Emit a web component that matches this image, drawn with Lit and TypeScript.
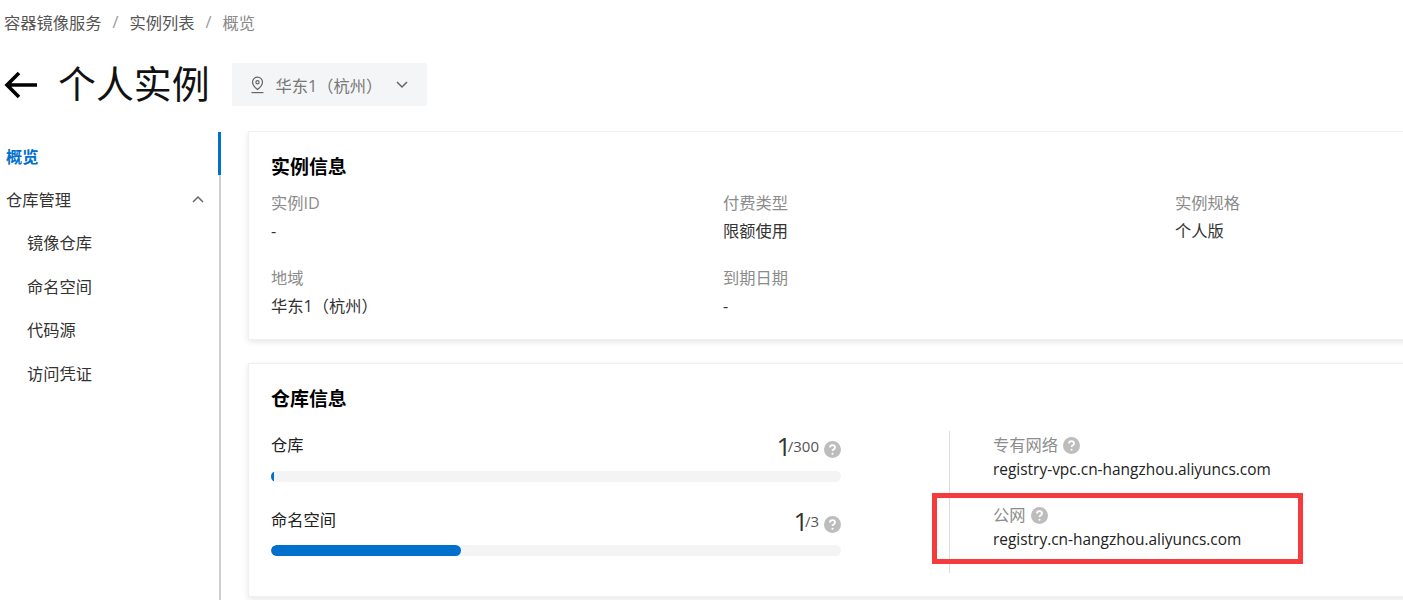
import { LitElement, html, css, svg } from 'lit';
import { customElement } from 'lit/decorators.js';

const help = html`<svg class="help" viewBox="0 0 16 16" aria-hidden="true">
  <circle cx="8" cy="8" r="8" fill="#bdbdbd"></circle>
  <path d="M5.6 6.2a2.4 2.4 0 0 1 4.8 0c0 1.5-2.4 1.7-2.4 3.3" fill="none" stroke="#fff" stroke-width="1.7"></path>
  <circle cx="8" cy="12" r="1.05" fill="#fff"></circle>
</svg>`;

const chevron = (d: string) => svg`<path d=${d} fill="none" stroke="currentColor" stroke-width="1.5"></path>`;

@customElement('app-root')
export class AppRoot extends LitElement {
  static styles = css`
    :host {
      display: block;
      width: 1403px;
      height: 600px;
      overflow: hidden;
      background: #fff;
      color: #333;
      font-family: 'Open Sans', 'Noto Sans CJK SC', sans-serif;
      font-size: 16.25px;
    }
    .crumbs {
      display: flex;
      align-items: center;
      height: 43px;
      padding-left: 4px;
      color: #555;
    }
    .crumbs .sep {
      margin: 0 11px;
      color: #999;
    }
    .crumbs .current {
      color: #888;
    }
    .head {
      display: flex;
      align-items: center;
      height: 43px;
      margin-top: 20px;
      padding-left: 4px;
    }
    .back {
      width: 34px;
      height: 30px;
      color: #000;
    }
    h1 {
      margin: -6px 22px 0 20px;
      font-size: 37.9px;
      font-weight: 400;
      color: #111;
    }
    .region {
      display: flex;
      align-items: center;
      width: 195px;
      height: 43px;
      box-sizing: border-box;
      padding-left: 18px;
      border-radius: 2px;
      background: #f4f5f6;
      color: #777;
    }
    .region .pin {
      width: 15px;
      height: 18px;
      margin-right: 11px;
    }
    .region .down {
      width: 14px;
      height: 10px;
      margin-left: 13px;
      color: #666;
    }
    .body {
      display: flex;
      margin-top: 26px;
    }
    nav {
      flex: none;
      width: 221px;
      height: 468px;
      box-sizing: border-box;
      border-right: 2px solid #d0d0d0;
      position: relative;
    }
    .item {
      display: flex;
      align-items: center;
      justify-content: space-between;
      height: 43.4px;
      box-sizing: border-box;
      padding: 4px 14px 0 6px;
    }
    .item.sub {
      padding-left: 27px;
    }
    .item.active {
      font-weight: 700;
      color: #0070cc;
      margin-right: -2px;
      border-right: 3px solid #0070cc;
    }
    .item svg {
      width: 14px;
      height: 10px;
      color: #666;
    }
    main {
      flex: 1;
      min-width: 0;
      margin-top: -1px;
      padding-left: 27px;
      overflow: hidden;
    }
    .card {
      width: 1400px;
      box-sizing: border-box;
      padding: 0 22px;
      border: 1px solid #f0f0f0;
      box-shadow: 0 2px 6px rgba(0, 0, 0, 0.1);
      background: #fff;
    }
    .info {
      height: 209px;
      margin-bottom: 23px;
    }
    .repo {
      height: 234px;
    }
    h2 {
      margin: 0;
      padding-top: 20px;
      height: 31px;
      font-size: 18.95px;
      font-weight: 700;
      line-height: 30px;
      color: #000;
    }
    .repo h2 {
      height: 30px;
    }
    .grid {
      display: grid;
      grid-template-columns: repeat(3, 452px);
      row-gap: 19px;
      margin-top: 6px;
    }
    .label {
      color: #8c8c8c;
      line-height: 28px;
    }
    .value {
      color: #333;
      line-height: 28px;
    }
    .repo-body {
      display: flex;
      margin-top: 17px;
    }
    .meters {
      flex: none;
      width: 570px;
    }
    .meter {
      height: 75px;
    }
    .meter-top {
      display: flex;
      align-items: flex-end;
      justify-content: space-between;
      height: 30px;
      color: #222;
    }
    .meter-top .name {
      align-self: flex-start;
      margin-top: 0.5px;
    }
    .count {
      display: flex;
      align-items: center;
      font-size: 15px;
      color: #555;
    }
    .count b {
      letter-spacing: -3.5px;
      font-size: 26px;
      font-weight: 400;
      color: #333;
      line-height: 30px;
    }
    .help {
      flex: none;
      width: 17px;
      height: 17px;
      margin-left: 5px;
    }
    .count .help {
      margin-top: 7px;
    }
    .track {
      height: 11px;
      margin-top: 10px;
      border-radius: 6px;
      background: #f4f4f4;
      overflow: hidden;
    }
    .meter + .meter .track {
      margin-top: 9px;
    }
    .fill {
      height: 100%;
      border-radius: 6px;
      background: #0070cc;
    }
    .nets {
      position: relative;
      margin-left: 108px;
      height: 142px;
      padding-left: 43px;
      border-left: 1px solid #ddd;
    }
    .net {
      height: 70px;
    }
    .net .label {
      display: flex;
      align-items: center;
      height: 28px;
    }
    .net .value {
      line-height: 20px;
      color: #222;
      font-size: 15.45px;
    }
    .mark {
      position: absolute;
      left: -18px;
      top: 62px;
      width: 371px;
      height: 71px;
      box-sizing: border-box;
      border: 5px solid #f53b3b;
    }
  `;

  render() {
    return html`
      <div class="crumbs">
        <span>容器镜像服务</span><span class="sep">/</span><span>实例列表</span><span class="sep">/</span><span class="current">概览</span>
      </div>
      <div class="head">
        <svg class="back" viewBox="0 0 34 30">
          <path d="M33 15H4M15 3 3 15l12 12" fill="none" stroke="currentColor" stroke-width="3.6"></path>
        </svg>
        <h1>个人实例</h1>
        <div class="region">
          <svg class="pin" viewBox="0 0 15 18">
            <path d="M7.5 1.2a5 5 0 0 0-5 5c0 3.2 5 7.3 5 7.3s5-4.1 5-7.3a5 5 0 0 0-5-5Z" fill="none" stroke="#666" stroke-width="1.2"></path>
            <circle cx="7.5" cy="6.2" r="1.6" fill="none" stroke="#666" stroke-width="1.2"></circle>
            <path d="M1.5 16.6h12" stroke="#666" stroke-width="1.2"></path>
          </svg>
          <span>华东1（杭州）</span>
          <svg class="down" viewBox="0 0 14 10">${chevron('M2 2l5 5 5-5')}</svg>
        </div>
      </div>
      <div class="body">
        <nav>
          <div class="item active">概览</div>
          <div class="item">仓库管理<svg viewBox="0 0 14 10">${chevron('M2 8l5-5 5 5')}</svg></div>
          <div class="item sub">镜像仓库</div>
          <div class="item sub">命名空间</div>
          <div class="item sub">代码源</div>
          <div class="item sub">访问凭证</div>
        </nav>
        <main>
          <section class="card info">
            <h2>实例信息</h2>
            <div class="grid">
              <div><div class="label">实例ID</div><div class="value">-</div></div>
              <div><div class="label">付费类型</div><div class="value">限额使用</div></div>
              <div><div class="label">实例规格</div><div class="value">个人版</div></div>
              <div><div class="label">地域</div><div class="value">华东1（杭州）</div></div>
              <div><div class="label">到期日期</div><div class="value">-</div></div>
            </div>
          </section>
          <section class="card repo">
            <h2>仓库信息</h2>
            <div class="repo-body">
              <div class="meters">
                <div class="meter">
                  <div class="meter-top"><span class="name">仓库</span><span class="count"><b>1</b>/300${help}</span></div>
                  <div class="track"><div class="fill" style="width: 0.5%"></div></div>
                </div>
                <div class="meter">
                  <div class="meter-top"><span class="name">命名空间</span><span class="count"><b>1</b>/3${help}</span></div>
                  <div class="track"><div class="fill" style="width: 33.33%"></div></div>
                </div>
              </div>
              <div class="nets">
                <div class="net">
                  <div class="label">专有网络${help}</div>
                  <div class="value">registry-vpc.cn-hangzhou.aliyuncs.com</div>
                </div>
                <div class="net">
                  <div class="label">公网${help}</div>
                  <div class="value">registry.cn-hangzhou.aliyuncs.com</div>
                </div>
                <div class="mark"></div>
              </div>
            </div>
          </section>
        </main>
      </div>
    `;
  }
}
